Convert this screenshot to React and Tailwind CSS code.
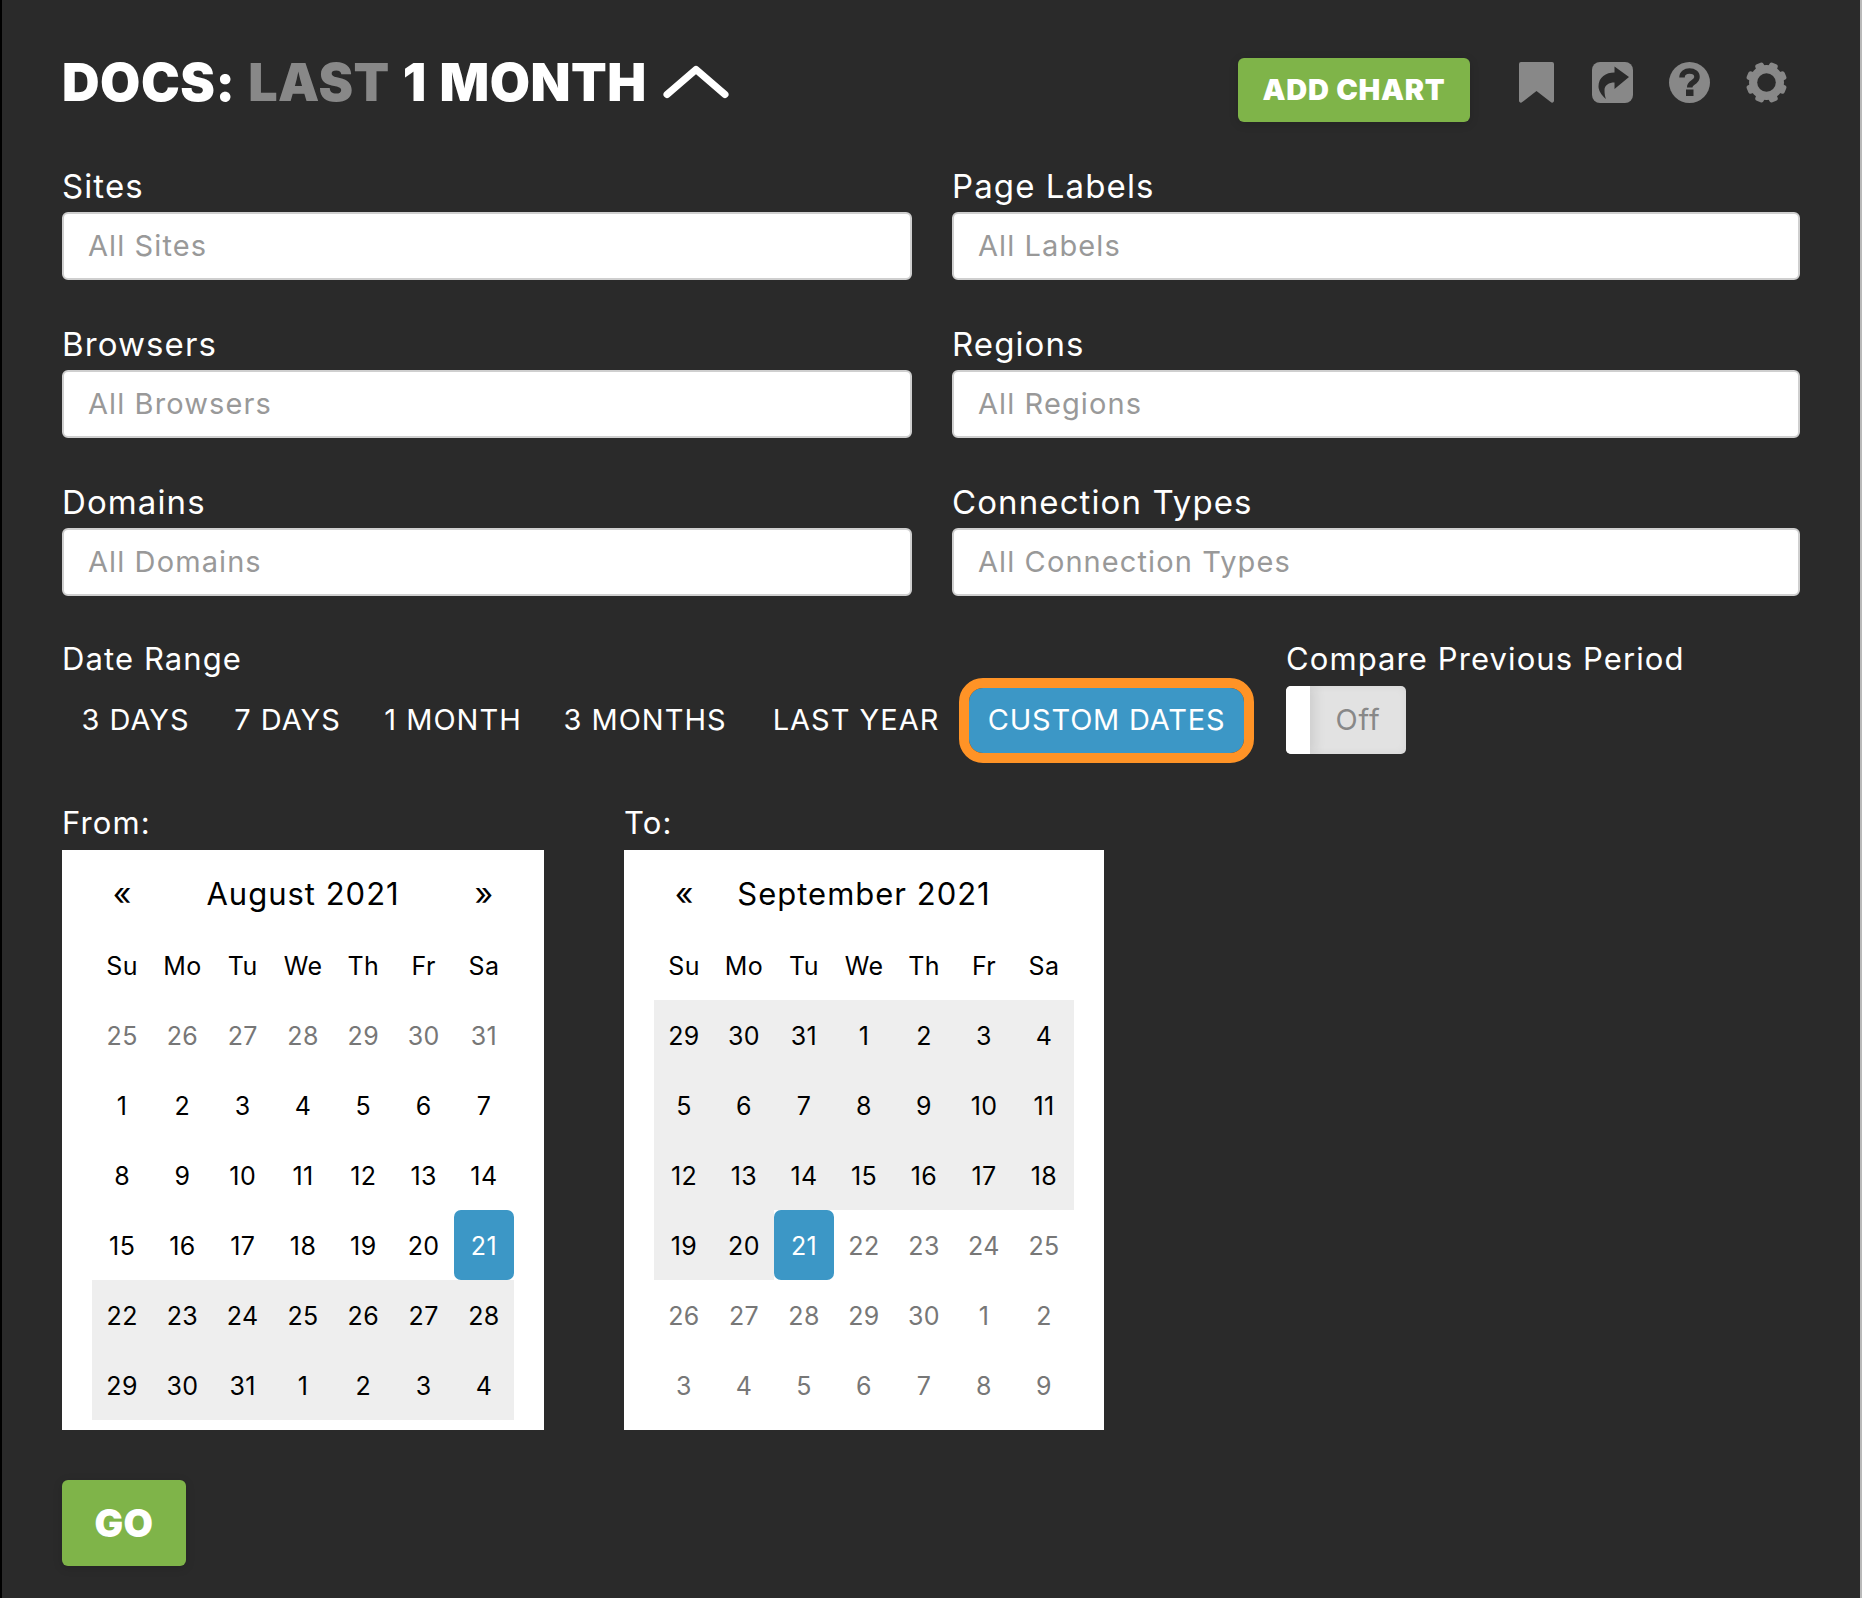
import React from 'react';

const FONT = "font-['Inter',_'Open_Sans',_sans-serif]";

const filters = [
  ['Sites', 'All Sites', 'Page Labels', 'All Labels'],
  ['Browsers', 'All Browsers', 'Regions', 'All Regions'],
  ['Domains', 'All Domains', 'Connection Types', 'All Connection Types'],
];

// width of each preset so the labels keep their spacing
const presets = [
  ['3 DAYS', 'w-[147px]'],
  ['7 DAYS', 'w-[147px]'],
  ['1 MONTH', 'w-[174px]'],
  ['3 MONTHS', 'w-[200px]'],
  ['LAST YEAR', 'w-[212px]'],
];

const weekDays = ['Su', 'Mo', 'Tu', 'We', 'Th', 'Fr', 'Sa'];

const rangeOf = (start, count) => Array.from({ length: count }, (_, i) => start + i);

// kind: m = muted, n = normal, r = in range, s = selected
const augustDays = [
  ...[25, 26, 27, 28, 29, 30, 31].map((d) => [d, 'm']),
  ...rangeOf(1, 20).map((d) => [d, 'n']),
  [21, 's'],
  ...rangeOf(22, 10).map((d) => [d, 'r']),
  ...rangeOf(1, 4).map((d) => [d, 'r']),
];

const septemberDays = [
  ...[29, 30, 31].map((d) => [d, 'r']),
  ...rangeOf(1, 20).map((d) => [d, 'r']),
  [21, 's'],
  ...rangeOf(22, 9).map((d) => [d, 'm']),
  ...rangeOf(1, 2).map((d) => [d, 'm']),
  ...rangeOf(3, 7).map((d) => [d, 'm']),
];

const dayClass = {
  m: 'text-[#777777]',
  n: 'text-black',
  r: 'text-black bg-[#eeeeee]',
  s: 'text-white bg-[#3c97c6] rounded-[7px]',
};

const Field = ({ label, placeholder }) => (
  <div>
    <div className="h-[40px] text-[33px] leading-[28px] tracking-[1.1px] text-white">{label}</div>
    <div className="flex h-[68px] items-center rounded-[6px] border-2 border-[#cfcfcf] bg-white pl-[24px] text-[29px] tracking-[1.1px] text-[#999999]">
      {placeholder}
    </div>
  </div>
);

const Calendar = ({ title, days, width, hasNext, cellClass }) => (
  <div className={`${width} bg-white px-[30px] py-[10px]`}>
    <div className={`grid ${cellClass} h-[70px] items-center pb-[2px] text-center text-black`}>
      <div className="text-[32px]">«</div>
      <div className="col-span-5 text-[31px] tracking-[1px]">{title}</div>
      {hasNext && <div className="text-[32px]">»</div>}
    </div>
    <div className={`grid ${cellClass} auto-rows-[70px] text-[25px] tracking-[0.4px] text-black`}>
      {weekDays.map((d) => (
        <div key={d} className="flex items-center justify-center pt-[3px]">{d}</div>
      ))}
      {days.map(([d, kind], i) => (
        <div key={i} className={`flex items-center justify-center pt-[3px] ${dayClass[kind]}`}>{d}</div>
      ))}
    </div>
  </div>
);

const BookmarkIcon = () => (
  <svg width="35" height="41" viewBox="0 0 35 41" fill="#888888">
    <path d="M2 0H33a2 2 0 0 1 2 2V38.5c0 2-2 3-3.3 1.5L17.5 29 3.3 40C2 41.5 0 40.5 0 38.5V2a2 2 0 0 1 2-2z" />
  </svg>
);

const ShareIcon = () => (
  <svg width="41" height="41" viewBox="0 0 41 41">
    <rect width="41" height="41" rx="8" fill="#888888" />
    <path
      fill="#2a2a2a"
      d="M22.5 4.5 37 15 22.5 27V20.5C17 20.5 12.5 23 12.5 28 12.5 32 13 35 14 37 9 33 6.5 28 6.5 24.5 6.5 15 14 10.5 22.5 10.5Z"
    />
  </svg>
);

const HelpIcon = () => (
  <svg width="41" height="41" viewBox="0 0 41 41">
    <circle cx="20.5" cy="20.5" r="20.5" fill="#888888" />
    <path
      fill="none"
      stroke="#2a2a2a"
      strokeWidth="5.5"
      d="M13 15.5C13 11 16.5 9 20.5 9 25 9 28 11.5 28 15 28 18 26 19.3 23.8 20.6 21.8 21.8 20.7 23 20.7 25.5"
    />
    <rect x="17" y="27.5" width="7.5" height="6.5" fill="#2a2a2a" />
  </svg>
);

const GearIcon = () => (
  <svg width="41" height="41" viewBox="0 0 41 41" fill="#888888">
    <circle cx="20.5" cy="20.5" r="17.5" />
    {[22.5, 67.5, 112.5, 157.5, 202.5, 247.5, 292.5, 337.5].map((a) => (
      <rect key={a} x="16" y="0" width="9" height="10" rx="2.5" transform={`rotate(${a} 20.5 20.5)`} />
    ))}
    <circle cx="20.5" cy="20.5" r="9.3" fill="#2a2a2a" />
  </svg>
);

const App = () => {
  return (
    <div className={`${FONT} relative flex h-[1598px] w-[1862px] overflow-hidden border-l-2 border-r-2 border-l-black border-r-[#b9b9b9] bg-[#2a2a2a] pl-[60px] pr-[60px] pt-[58px]`}>
      {/* slivers of the page behind the panel */}
      <div className="absolute -right-[2px] top-0 h-[52px] w-[2px] bg-[#2a2035]" />
      <div className="absolute -right-[2px] top-[78px] h-[28px] w-[2px] bg-[#4f86b8]" />
      <div className="absolute -right-[2px] top-[106px] h-[20px] w-[2px] bg-[#5a4020]" />
      <div className="absolute -right-[2px] top-[372px] h-[20px] w-[2px] bg-[#333333]" />
      <div className="absolute -right-[2px] top-[457px] h-[21px] w-[2px] bg-[#333333]" />

      <div className="w-[1738px]">
        {/* header */}
        <div className="flex h-[64px] items-start">
          <h1 className="flex h-[50px] items-center whitespace-nowrap text-[52px] font-black leading-none tracking-[0.5px] [word-spacing:2px] text-white">
            DOCS:&nbsp;<span className="text-[#888888]">LAST</span>&nbsp;1&nbsp;MONTH
          </h1>
          <svg className="ml-[16px] mt-[7px]" width="66" height="34" viewBox="0 0 66 34" fill="none" stroke="white" strokeWidth="7" strokeLinecap="round" strokeLinejoin="round">
            <path d="M4 29.5 33 4.5 62 29.5" />
          </svg>
          <button className="ml-auto h-[64px] w-[232px] rounded-[6px] bg-[#7fb449] text-[29px] font-black tracking-[0.7px] text-white shadow-[0_2px_10px_rgba(0,0,0,0.15)]">
            ADD CHART
          </button>
          <div className="ml-[49px] mr-[13px] mt-[4px] flex items-center gap-[38px]">
            <BookmarkIcon />
            <ShareIcon />
            <div className="-ml-[2px] flex gap-[36px]">
              <HelpIcon />
              <GearIcon />
            </div>
          </div>
        </div>

        {/* filters */}
        <div className="mt-[50px] grid w-[1738px] grid-cols-[850px_848px] gap-x-[40px] gap-y-[50px]">
          {filters.map((row) => (
            <React.Fragment key={row[0]}>
              <Field label={row[0]} placeholder={row[1]} />
              <Field label={row[2]} placeholder={row[3]} />
            </React.Fragment>
          ))}
        </div>

        {/* date range */}
        <div className="mt-[43px] flex">
          <div className="w-[1224px]">
            <div className="h-[40px] text-[31px] leading-[40px] tracking-[1.1px] text-white">Date Range</div>
            <div className="mt-[9px] flex items-center">
              {presets.map(([label, width]) => (
                <button key={label} className={`${width} mr-[5px] h-[64px] pb-[2px] text-center text-[29px] tracking-[1px] text-white`}>
                  {label}
                </button>
              ))}
              <button className="ml-[2px] h-[65px] w-[275px] rounded-[14px] bg-[#3c97c6] pb-[2px] text-[29px] tracking-[0.8px] text-white outline-[10px] outline-[#ff9326]">
                CUSTOM DATES
              </button>
            </div>
          </div>
          <div>
            <div className="h-[40px] whitespace-nowrap text-[31px] leading-[40px] tracking-[1.1px] text-white">Compare Previous Period</div>
            <div className="mt-[7px] flex h-[68px] w-[120px] overflow-hidden rounded-[5px] bg-[#e2e2e2] shadow-[inset_0_0_8px_rgba(0,0,0,0.06)]">
              <div className="w-[24px] bg-white shadow-[5px_0_12px_rgba(0,0,0,0.09)]" />
              <div className="flex flex-1 items-center justify-center text-[29px] tracking-[0.8px] text-[#888888]">Off</div>
            </div>
          </div>
        </div>

        {/* calendars */}
        <div className="mt-[49px] flex gap-[80px]">
          <div>
            <div className="h-[40px] text-[31px] leading-[40px] tracking-[1.1px] text-white">From:</div>
            <div className="mt-[7px]">
              <Calendar title="August 2021" days={augustDays} width="w-[482px]" hasNext cellClass="grid-cols-[repeat(7,60.3px)]" />
            </div>
          </div>
          <div>
            <div className="h-[40px] text-[31px] leading-[40px] tracking-[1.1px] text-white">To:</div>
            <div className="mt-[7px]">
              <Calendar title="September 2021" days={septemberDays} width="w-[480px]" cellClass="grid-cols-[repeat(7,60px)]" />
            </div>
          </div>
        </div>

        <button className="mt-[50px] h-[86px] w-[124px] rounded-[6px] bg-[#7fb449] text-[38px] font-black tracking-[0.5px] text-white shadow-[0_2px_10px_rgba(0,0,0,0.15)]">
          GO
        </button>
      </div>
    </div>
  );
};

export default App;
